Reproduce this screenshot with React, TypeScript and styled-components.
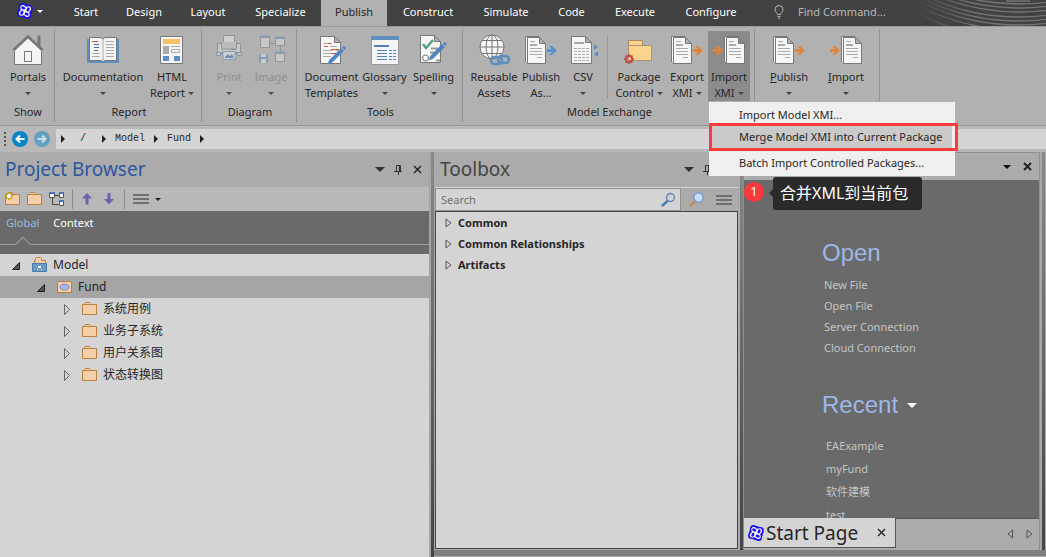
import React from "react";
import styled, { createGlobalStyle, css } from "styled-components";

const GlobalStyle = createGlobalStyle`
  *, *::before, *::after { box-sizing: border-box; }
  body {
    margin: 0;
    background: #ababab;
    color: #262626;
    font: 11px/16px "Noto Sans", "Noto Sans CJK SC", sans-serif;
  }
  button, input { font: inherit; color: inherit; }
  button { margin: 0; padding: 0; border: 0; background: none; cursor: pointer; }
  a { color: inherit; text-decoration: none; }
  ul { margin: 0; padding: 0; list-style: none; }
  svg { display: block; flex: none; }
`;

/* ---------- shell ---------- */

const Shell = styled.div`
  display: flex;
  flex-direction: column;
  height: 100vh;
  overflow: hidden;
`;

const MenuBar = styled.nav`
  position: relative;
  display: flex;
  align-items: stretch;
  flex: none;
  height: 26px;
  background: #424242;
  color: #fff;
`;

const AppMenu = styled.button`
  display: flex;
  align-items: center;
  gap: 4px;
  width: 60px;
  padding: 0 0 4px 17px;
`;

const MenuTab = styled.button<{ $w: number; $active?: boolean }>`
  position: relative;
  flex: none;
  width: ${(p) => p.$w}px;
  padding-bottom: 2px;
  ${(p) =>
    p.$active &&
    css`
      background: #b1b1b1;
      color: #262626;
      z-index: 1;
    `}
`;

const FindBox = styled.label`
  display: flex;
  align-items: center;
  gap: 14px;
  padding: 0 0 2px 22px;
  color: #b8b8b8;
`;

const FindInput = styled.input`
  width: 110px;
  padding: 0;
  border: 0;
  outline: 0;
  background: none;
  &::placeholder { color: #b8b8b8; opacity: 1; }
`;

const Swirl = styled.div`
  margin-left: auto;
  overflow: hidden;
`;

/* ---------- ribbon ---------- */

const Ribbon = styled.div`
  display: flex;
  flex: none;
  height: 100px;
  padding-top: 2px;
  background: #b1b1b1;
  border-top: 1px solid #9a9a9a;
  border-bottom: 1px solid #979797;
`;

const Group = styled.section<{ $w: number; $short?: boolean }>`
  display: flex;
  flex-direction: column;
  flex: none;
  width: ${(p) => p.$w}px;
  height: ${(p) => (p.$short ? 72 : 93)}px;
  padding: 2px 0 0 2px;
  border-right: 1px solid #939393;
`;

const GroupTools = styled.div`
  display: flex;
  justify-content: center;
  height: 70px;
`;

const GroupTitle = styled.h2`
  margin: 3px 0 0;
  font: inherit;
  text-align: center;
`;

const ToolWrap = styled.div`
  position: relative;
`;

const ToolButton = styled.button<{ $w: number; $active?: boolean }>`
  display: flex;
  flex-direction: column;
  align-items: center;
  width: ${(p) => p.$w}px;
  height: 70px;
  padding-top: 3px;
  white-space: nowrap;
  background: ${(p) => (p.$active ? "#8b8b8b" : "none")};
  &:disabled { color: #8a8a8a; opacity: 0.85; }
  &:disabled svg { opacity: 0.6; }
`;

const ToolText = styled.span`
  display: flex;
  flex-direction: column;
  align-items: center;
  margin-top: 3px;
`;

const ToolLine = styled.span`
  display: flex;
  align-items: center;
  gap: 3px;
  height: 16px;
`;

const InnerRule = styled.div`
  width: 1px;
  height: 62px;
  margin: 5px 4px 0;
  background: #979797;
`;

const Caret = styled.span<{ $tone?: string; $size?: number }>`
  width: 0;
  height: 0;
  border: ${(p) => p.$size ?? 3}px solid transparent;
  border-bottom-width: 0;
  border-top-color: ${(p) => p.$tone ?? "#444"};
`;

/* ---------- drop-down menu ---------- */

const DropMenu = styled.ul`
  position: absolute;
  top: 71px;
  left: 1px;
  z-index: 10;
  width: 246px;
  padding: 2px 3px 2px;
  background: #efefef;
`;

const DropItem = styled.li<{ $chosen?: boolean }>`
  position: relative;
  ${(p) =>
    p.$chosen &&
    css`
      margin-bottom: 4px;
      background: #cacaca;
      &::after {
        content: "";
        position: absolute;
        inset: -3px -6px -3px -3px;
        border: 3px solid #fb3a3c;
        pointer-events: none;
      }
    `}
  button {
    width: 100%;
    height: 22px;
    padding-left: 27px;
    text-align: left;
    white-space: nowrap;
  }
`;

/* ---------- breadcrumb ---------- */

const PathBar = styled.div`
  display: flex;
  align-items: center;
  flex: none;
  height: 26px;
  background: #b8b8b8;
`;

const Grip = styled.div`
  width: 2px;
  height: 14px;
  margin: 0 6px 0 4px;
  background: repeating-linear-gradient(#555 0 2px, transparent 2px 4px);
`;

const RoundButton = styled.button<{ $dim?: boolean }>`
  display: grid;
  place-items: center;
  width: 16px;
  height: 16px;
  margin-right: 6px;
  border-radius: 50%;
  background: ${(p) => (p.$dim ? "#62a0c2" : "#0a85c7")};
`;

const PathField = styled.div`
  display: flex;
  align-items: center;
  flex: 1;
  height: 20px;
  gap: 9px;
  padding-left: 5px;
  background: #d4d4d4;
  font: 10px/20px "Liberation Mono", monospace;
`;

const Chevron = styled.span`
  width: 0;
  height: 0;
  border: 4px solid transparent;
  border-right-width: 0;
  border-left-color: #222;
`;

const PathRoot = styled.a`
  width: 19px;
  padding-left: 6px;
`;

/* ---------- panels ---------- */

const Workspace = styled.main`
  display: flex;
  flex: 1;
  min-height: 0;
`;

const Browser = styled.section`
  display: flex;
  flex-direction: column;
  flex: none;
  width: 431px;
  border-right: 2px solid #a5a5a5;
`;

const Splitter = styled.div`
  flex: none;
  width: 3px;
  background: linear-gradient(#8a8a8a, #444);
`;

const Right = styled.div`
  display: flex;
  flex-direction: column;
  flex: 1;
  min-width: 0;
`;

const Docks = styled.div`
  display: flex;
  flex: 1;
  min-height: 0;
`;

const StatusEdge = styled.div`
  flex: none;
  height: 7px;
  background: #808080;
  border-bottom: 1px solid #ababab;
`;

const PanelHead = styled.header`
  display: flex;
  align-items: center;
  flex: none;
  height: 35px;
  padding: 0 2px 0 5px;
  background: #ababab;
`;

const PanelTitle = styled.h1<{ $tone: string }>`
  flex: 1;
  margin: 0;
  padding-bottom: 2px;
  font-size: 19px;
  line-height: 28px;
  font-weight: 400;
  color: ${(p) => p.$tone};
`;

const HeadButton = styled.button`
  display: grid;
  place-items: center;
  width: 19px;
  height: 20px;
`;

const BrowserTools = styled.div`
  display: flex;
  align-items: center;
  flex: none;
  height: 24px;
  padding-left: 2px;
  background: #b8b8b8;
`;

const IconButton = styled.button`
  display: grid;
  place-items: center;
  width: 22px;
  height: 22px;
`;

const ToolRule = styled.div`
  width: 1px;
  height: 20px;
  margin: 0 3px 0 4px;
  background: #8d8d8d;
`;

const ListButton = styled.button`
  display: flex;
  align-items: center;
  gap: 6px;
  margin-left: 5px;
`;

const BrowserTabs = styled.div`
  flex: none;
  height: 43px;
  padding-top: 4px;
  background: #6a6a6a;
  color: #fff;
`;

const TabRow = styled.div`
  display: flex;
  gap: 14px;
  height: 30px;
  padding-left: 6px;
  border-bottom: 1px solid #9c9c9c;
`;

const BrowserTab = styled.button<{ $active?: boolean }>`
  position: relative;
  height: 16px;
  color: ${(p) => (p.$active ? "#9db7e8" : "#fff")};
  ${(p) =>
    p.$active &&
    css`
      &::after {
        content: "";
        position: absolute;
        left: calc(50% - 6px);
        top: 24px;
        width: 12px;
        height: 12px;
        transform: rotate(45deg);
        background: #6a6a6a;
        border: 1px solid #9c9c9c;
        border-right-color: #6a6a6a;
        border-bottom-color: #6a6a6a;
      }
    `}
`;

const Tree = styled.ul`
  flex: 1;
  background: #d4d4d4;
  font-size: 12px;
`;

const TreeRow = styled.li<{ $indent: number; $selected?: boolean }>`
  display: flex;
  align-items: center;
  height: 22px;
  padding-left: ${(p) => p.$indent}px;
  background: ${(p) => (p.$selected ? "#a5a5a5" : "none")};
  > svg + svg { margin-right: 5px; }
`;

const Toolbox = styled.section`
  display: flex;
  flex-direction: column;
  flex: none;
  width: 306px;
  padding: 0 2px 1px 1px;
  background: #ababab;
`;

const SearchRow = styled.div`
  display: flex;
  align-items: stretch;
  flex: none;
  height: 24px;
  border-top: 1px solid #d4d4d4;
`;

const SearchField = styled.label`
  display: flex;
  align-items: center;
  flex: 1;
  padding: 0 4px 0 5px;
  background: #d4d4d4;
  border: 1px solid #8f8f8f;
`;

const SearchInput = styled.input`
  flex: 1;
  min-width: 0;
  padding: 0;
  border: 0;
  outline: 0;
  background: none;
  &::placeholder { color: #707070; opacity: 1; }
`;

const SearchButtons = styled.div`
  display: flex;
  align-items: center;
  gap: 9px;
  padding: 0 6px 0 4px;
`;

const Categories = styled.ul`
  flex: 1;
  background: #d4d4d4;
  border: 1px solid #444;
`;

const Category = styled.li`
  display: flex;
  align-items: center;
  gap: 6px;
  height: 21px;
  padding-left: 9px;
  font-weight: 700;
`;

const StartPanel = styled.section`
  position: relative;
  display: flex;
  flex-direction: column;
  flex: 1;
  min-width: 0;
  padding-bottom: 2px;
  background: #ababab;
  border: 1px solid #8f8f8f;
  border-width: 1px 1px 0 1px;
`;

const StartHead = styled.header`
  display: flex;
  align-items: center;
  justify-content: flex-end;
  gap: 2px;
  flex: none;
  height: 27px;
  padding-right: 2px;
`;

const StartBody = styled.div`
  flex: 1;
  min-height: 0;
  overflow: hidden;
  padding: 57px 0 0 78px;
  background: #6a6a6a;
  color: #c4c4c4;
`;

const StartHeading = styled.h2`
  display: flex;
  align-items: center;
  gap: 9px;
  margin: 0;
  font: 24px/32px "Liberation Sans", Arial, sans-serif;
  color: #9db7e8;
`;

const LinkList = styled.ul<{ $recent?: boolean }>`
  margin: ${(p) => (p.$recent ? "13px 0 0 4px" : "5px 0 31px 2px")};
  li { line-height: ${(p) => (p.$recent ? 23 : 21)}px; }
`;

const TabStrip = styled.div`
  display: flex;
  flex: none;
  justify-content: space-between;
  height: 30px;
`;

const PageTab = styled.div`
  display: flex;
  align-items: center;
  width: 152px;
  padding: 0 4px;
  background: #d4d4d4;
  border: 1px solid #555;
  border-width: 0 1px 1px 0;
  font-size: 19px;
  white-space: nowrap;
`;

const TabLabel = styled.button`
  display: flex;
  align-items: center;
  gap: 2px;
  flex: 1;
  line-height: 26px;
`;

const Scrollers = styled.div`
  display: flex;
  flex: 1;
  justify-content: flex-end;
  align-items: center;
  border-top: 1px solid #555;
`;

const RightEdge = styled.div`
  flex: none;
  width: 6px;
  border: solid #a8a8a8;
  border-width: 0 1px 0 2px;
  background: linear-gradient(#8a8a8a, #444);
`;

/* ---------- annotation ---------- */

const StepBadge = styled.div`
  position: absolute;
  top: 29px;
  left: 0;
  z-index: 5;
  width: 20px;
  height: 20px;
  border-radius: 50%;
  background: #fb3a3c;
  color: #fff;
  font-size: 12px;
  line-height: 20px;
  text-align: center;
`;

const StepNote = styled.div`
  position: absolute;
  top: 24px;
  left: 29px;
  z-index: 5;
  height: 33px;
  padding: 0 14px 0 7px;
  border-radius: 3px;
  background: #2a2a2a;
  color: #fff;
  font: 16px/33px "Noto Sans", "Noto Sans CJK SC", sans-serif;
  white-space: nowrap;
  &::before {
    content: "";
    position: absolute;
    left: -4px;
    top: 12px;
    border: 4px solid transparent;
    border-left-width: 0;
    border-right-color: #2a2a2a;
  }
`;

/* ---------- icons ---------- */

const Logo = () => (
  <svg width="16" height="16" viewBox="0 0 16 16">
    <g fill="#1a12e6">
      <circle cx="8" cy="8" r="7" />
      <circle cx="5.500" cy="3.600" r="3.500" />
      <circle cx="12.400" cy="5.500" r="3.500" />
      <circle cx="10.500" cy="12.400" r="3.500" />
      <circle cx="3.600" cy="10.500" r="3.500" />
    </g>
    <g fill="#fff">
      <circle cx="8" cy="8" r="4.600" />
      <circle cx="5.800" cy="4.400" r="2.500" />
      <circle cx="11.600" cy="5.800" r="2.500" />
      <circle cx="10.200" cy="11.600" r="2.500" />
      <circle cx="4.400" cy="10.200" r="2.500" />
    </g>
    <g fill="#1a12e6">
      {[0, 90, 180, 270].map((a) => (
        <ellipse key={a} cx="6.300" cy="4.900" rx="2.200" ry="1.400" transform={`rotate(${a} 8 8) rotate(25 6.300 4.900)`} />
      ))}
    </g>
  </svg>
);

const Tool = ({ children }: { children: React.ReactNode }) => (
  <svg width="32" height="32" viewBox="0 0 32 32">{children}</svg>
);

const House = () => (
  <Tool>
    <path d="M25.5 1.5h3v11h-3z" fill="#777" />
    <path d="M2.5 16.5L16 3.5L29.500 16.500V30.500H2.500Z" fill="#f4f4f4" stroke="#777" />
    <path d="M1.500 16L16 2.500L30.500 16" fill="none" stroke="#777" strokeWidth="2.600" />
    <path d="M12.500 17.500h7v10h-7z" fill="#f4f4f4" stroke="#777" />
  </Tool>
);

const Book = () => (
  <Tool>
    <path d="M0 5h32v24H0z" fill="#5f8fc0" />
    <path d="M2.500 3.500H14L16 5L18 3.500H29.500V26.500H18L16 28L14 26.500H2.500Z" fill="#f4f4f4" stroke="#777" />
    <path d="M16 5v22" stroke="#aaa" />
    <path d="M5 7.500h6" stroke="#d0543c" />
    <path d="M7 10.500h5M7 13.500h5M7 16.500h4" stroke="#3d70b0" />
    <path d="M5 19.500h8M5 22.500h8M19 7.500h8M19 10.500h8M19 13.500h8M19 16.500h8M19 19.500h8M19 22.500h8" stroke="#aaa" />
  </Tool>
);

const HtmlPage = () => (
  <Tool>
    <path d="M4.500 2.500h22v27h-22z" fill="#f4f4f4" stroke="#777" />
    <path d="M7 5h17v5H7z" fill="#f7c25f" />
    <path d="M7 12h6v8H7z" fill="#aaa" />
    <path d="M15 12.500h9" stroke="#aaa" />
    <path d="M15.500 15.500h8v3h-8z" fill="none" stroke="#aaa" />
    <path d="M7 22h6v5H7zM18 22h6v5h-6z" fill="#5f8fc0" />
  </Tool>
);

const Printer = () => (
  <Tool>
    <path d="M10.500 1.500h11v8h-11z" fill="#eee" stroke="#777" />
    <path d="M4.500 9.500h23v9h-23z" fill="#ddd" stroke="#777" />
    <path d="M8.500 8v7h15V8" fill="#c8c8c8" stroke="#777" />
    <path d="M3.500 18.500h25v3h-4v-2h-17v2h-4Z" fill="#ddd" stroke="#5f7fa0" />
    <path d="M10 17.500h12v8H10z" fill="#eee" stroke="#5f8fc0" />
    <path d="M12 23l3-3 2 2 2-2 2 4h-9z" fill="#3d70b0" />
    <path d="M18 15.500h4" stroke="#3d70b0" />
  </Tool>
);

const Diagram = () => (
  <Tool>
    <path d="M14 9.500h6M25.500 12v7" stroke="#777" />
    <g fill="#ddd" stroke="#777">
      <path d="M5.500 3.500h9v10h-9zM20.500 4.500h9v7h-9zM20.500 19.500h9v8h-9z" />
    </g>
    <path d="M5 2.500h10M20 3.500h10M20 18.500h10" stroke="#5f8fc0" strokeWidth="2" />
    <path d="M4 20h9v9H4z" fill="#5f8fc0" />
    <path d="M6 20h5v3H6zM6 25h5v4H6z" fill="#e4e4e4" />
  </Tool>
);

const Sheet = ({ x = 0, y = 2 }: { x?: number; y?: number }) => (
  <path
    transform={`translate(${x} ${y})`}
    d="M.5.500H14.500L20.500 6.500V27.500H.500ZM14.500.500V6.500H20.500"
    fill="#f6f6f6"
    stroke="#777"
  />
);

const Pencil = () => (
  <>
    <path d="M12 30l1.500-4L25 14.500l2.500 2.500L16 28.500z" fill="#4d83bf" stroke="#4d83bf" strokeWidth=".6" />
    <path d="M26 13.500l2-1.500 2 2-1.500 2z" fill="#4d83bf" />
  </>
);

const DocTemplates = () => (
  <Tool>
    <Sheet x={4} />
    <path d="M7 9.500h9M7 16.500h9M7 22.500h8M20 16.500h3M7 19.500h14" stroke="#aaa" />
    <path d="M12 9.500h3M8 12.500h4M15 15.500h8M15 19.500h5" stroke="#dd5034" />
    <path d="M14 12.500h7" stroke="#aaa" />
    <Pencil />
  </Tool>
);

const GlossaryIcon = () => (
  <Tool>
    <path d="M2.500 2.500h27v28h-27z" fill="#f6f6f6" stroke="#999" />
    <path d="M2 2h28v4H2z" fill="#5f8fc0" />
    <path d="M5 12h15" stroke="#4d83bf" strokeWidth="2" />
    <path d="M8 16.500h10M8 19.500h10M8 22.500h10M8 25.500h10" stroke="#4d83bf" />
    <path d="M20 16.500h7M20 19.500h7M20 22.500h7M20 25.500h7" stroke="#4d83bf" strokeDasharray="3 1" />
  </Tool>
);

const SpellingIcon = () => (
  <Tool>
    <Sheet x={2} y={1} />
    <path d="M5 10l3 4 7-8" fill="none" stroke="#55a583" strokeWidth="2.500" />
    <circle cx="7.500" cy="24" r="3" fill="none" stroke="#777" />
    <path d="M13 14.500h7M12 18.500h5M18 26.500h4" stroke="#999" strokeWidth="2" />
    <g transform="translate(-1 -4)"><Pencil /></g>
  </Tool>
);

const Globe = () => (
  <Tool>
    <circle cx="14" cy="13" r="12" fill="#f6f6f6" stroke="#777" />
    <ellipse cx="14" cy="13" rx="6" ry="12" fill="none" stroke="#777" />
    <path d="M14 1v24M2 13h24M4 6.500h20M4 19.500h20" stroke="#777" />
    <g fill="none" stroke="#5f8fc0" strokeWidth="2.600">
      <rect x="13" y="23" width="11" height="7" rx="3.500" />
      <rect x="20" y="22" width="11" height="7" rx="3.500" />
    </g>
  </Tool>
);

const Pages = ({ x }: { x: number }) => (
  <g transform={`translate(${x} 0)`}>
    <path d="M.500 28V2.500H14" fill="none" stroke="#777" />
    <path d="M1 3h13v25H1z" fill="#f6f6f6" />
    <path d="M2.500 3.500H14.500L20.500 9.500V29.500H2.500ZM14.500 3.500V9.500H20.500" fill="#f6f6f6" stroke="#777" />
    <path d="M5 7.500h5M5 14.500h12M5 17.500h12M5 20.500h12M12 23.500h5" stroke="#aaa" />
    <path d="M5 11h7" stroke="#aaa" strokeWidth="2" />
  </g>
);

const Arrow = ({ x, tone }: { x: number; tone: string }) => (
  <path transform={`translate(${x} 0)`} d="M0 15h5l-3-3h3l5 4.500-5 4.500H2l3-3H0z" fill={tone} />
);

const BLUE = "#5b8fca";
const ORANGE = "#e0843c";

const PagesOut = ({ tone }: { tone: string }) => (
  <Tool>
    <Pages x={0} />
    <Arrow x={22} tone={tone} />
  </Tool>
);

const PagesIn = () => (
  <Tool>
    <Pages x={11} />
    <Arrow x={0} tone={ORANGE} />
  </Tool>
);

const Csv = () => (
  <Tool>
    <Sheet x={4} />
    <path d="M7 9h10" stroke="#aaa" strokeWidth="2" />
    <path d="M7 14.500h15M7 17.500h15M7 20.500h15M7 23.500h15M7 26.500h15" stroke="#aaa" strokeDasharray="3 1" />
    <path d="M27 10l4 3-4 3zM31 17v6l-4-3z" fill={BLUE} />
  </Tool>
);

const PackageIcon = () => (
  <Tool>
    <path d="M5.500 6.500h14v5h-14z" fill="#fbd38b" stroke="#a58a5c" />
    <path d="M5.500 11.500h23v15h-23z" fill="#fbd38b" stroke="#a5937a" />
    <circle cx="6" cy="25" r="3" fill="none" stroke="#c0504d" strokeWidth="2" />
    <path d="M6 20v2M6 28v2M1 25h2M9 25h2M2.500 21.500l1.500 1.500M8 27l1.500 1.500M2.500 28.500l1.500-1.500M8 23l1.500-1.500" stroke="#c0504d" strokeWidth="2" />
  </Tool>
);

const Bulb = () => (
  <svg width="10" height="14" viewBox="0 0 10 14" fill="none" stroke="#b8b8b8">
    <path d="M3.500 9.500C3.500 8 1 7 1 4.500a4 4 0 0 1 8 0C9 7 6.500 8 6.500 9.500ZM3.500 11.500h3M4 13.300h2" />
  </svg>
);

const SwirlLines = () => (
  <svg width="130" height="26" viewBox="0 0 130 26" fill="none" stroke="url(#fade)" strokeWidth="1.400">
    <defs>
      <linearGradient id="fade" gradientUnits="userSpaceOnUse" x1="0" y1="0" x2="60" y2="0">
        <stop offset="0" stopColor="#424242" />
        <stop offset="1" stopColor="#747474" />
      </linearGradient>
    </defs>
    <path d="M90 0h24v2h-24z" fill="#666" stroke="none" />
    {[4, 8, 12, 17, 21, 25, 30, 38, 47].map((b) => (
      <circle key={b} cx="103" cy={b - 220} r="220" />
    ))}
  </svg>
);

const NavArrow = ({ back }: { back?: boolean }) => (
  <svg width="10" height="10" viewBox="0 0 10 10" fill="none" stroke={back ? "#fff" : "#cfdde6"} strokeWidth="2">
    <path d={back ? "M9.500 5H2M5 1.500L1.500 5L5 8.500" : "M.500 5H8M5 1.500L8.500 5L5 8.500"} />
  </svg>
);

const Pin = () => (
  <svg width="9" height="10" viewBox="0 0 9 10" fill="none" stroke="#333">
    <path d="M2.500 6V.500h4V6M5.500 1v5M0 6.500h8M4.500 7v3" />
  </svg>
);

const Cross = ({ bold }: { bold?: boolean }) => (
  <svg width="9" height="9" viewBox="0 0 9 9" stroke="#222" strokeWidth={bold ? 2 : 1.400}>
    <path d="M1 1l7 7M8 1L1 8" />
  </svg>
);

const Folder = ({ isNew }: { isNew?: boolean }) => (
  <svg width="16" height="14" viewBox="0 0 16 14">
    <path d="M2.500 3V1.500l1-1h4l1 1V3" fill="#f5cfa8" stroke="#b9803f" />
    <path d="M.500 2.500h14v10H.500z" fill="#f5cfa8" stroke="#b9803f" />
    {isNew && (
      <>
        <path d="M4 0v8M0 4h8M1.200 1.200l5.600 5.600M6.800 1.200l-5.600 5.600" stroke="#b5a000" strokeWidth="1.300" />
        <circle cx="4" cy="4" r="2" fill="#fff" />
      </>
    )}
  </svg>
);

const TreeIcon = () => (
  <svg width="16" height="15" viewBox="0 0 16 15">
    <path d="M5 3.500h5M3.500 6v6.500h6" fill="none" stroke="#444" />
    <path d="M.500.500h5v5h-5zM10.500.500h4v5h-4zM10.500 8.500h4v5h-4z" fill="#fff" stroke="#555" />
    <path d="M0 1h6M10 1h5M10 9h5" stroke="#4a72b8" strokeWidth="2" />
  </svg>
);

const MoveArrow = ({ down }: { down?: boolean }) => (
  <svg width="10" height="12" viewBox="0 0 10 12" fill="#6a64b0">
    <path d={down ? "M3.500 0h3v6H10L5 11.500L0 6h3.500z" : "M3.500 11.500h3V5.500H10L5 0L0 5.500h3.500z"} />
  </svg>
);

const Lines = () => (
  <svg width="16" height="10" viewBox="0 0 16 10" fill="#6f6f6f">
    <path d="M0 0h16v2H0zM0 4h16v2H0zM0 8h16v2H0z" />
  </svg>
);

const ModelIcon = () => (
  <svg width="16" height="16" viewBox="0 0 16 16">
    <path d="M2.500 6V3.500h1v-2l1-1h4l1 1v2h4V7" fill="#f5cfa8" stroke="#b9803f" />
    <path d="M.500 6.500h14v8H.500z" fill="#6a9bc8" stroke="#4b7cac" />
    <path d="M6 9h3v2H6zM5 12h1v1H5zM9 12h1v1H9z" fill="#fff" />
  </svg>
);

const FundIcon = () => (
  <svg width="16" height="14" viewBox="0 0 16 14">
    <path d="M.500 1.500h14v11H.500z" fill="#f5cfa8" stroke="#b9803f" />
    <ellipse cx="7.500" cy="7" rx="4.500" ry="3" fill="#a5b6ee" stroke="#7b8bd0" />
  </svg>
);

const Expander = ({ open }: { open?: boolean }) => (
  <svg width="20" height="12" viewBox="0 0 20 12">
    {open ? (
      <path d="M7.500 3.500v7h-7z" fill="#555" stroke="#222" />
    ) : (
      <path d="M2.500 1.500v10l5-5z" fill="none" stroke="#666" />
    )}
  </svg>
);

const Wedge = ({ left }: { left?: boolean }) => (
  <svg width="7" height="10" viewBox="0 0 7 10" fill="none" stroke="#555">
    <path d={left ? "M5.500 1v8L1 5z" : "M1 1v8l5-4z"} />
  </svg>
);

const Magnifier = ({ color }: { color?: boolean }) => (
  <svg width="15" height="15" viewBox="0 0 15 15">
    <path d="M1.500 13.500L6.500 9" stroke={color ? "#b98a66" : "#4b80b8"} strokeWidth="2.400" strokeLinecap="round" />
    <circle cx="9.500" cy="5.500" r={color ? 4.600 : 4} fill={color ? "#c3e0f8" : "none"} stroke={color ? "#7d94dd" : "#5b8abb"} strokeWidth="1.400" />
  </svg>
);

/* ---------- parts ---------- */

interface ToolProps {
  icon: React.ReactNode;
  label: React.ReactNode;
  second?: string;
  caret?: boolean;
  width: number;
  active?: boolean;
  disabled?: boolean;
}

const RibbonTool = ({ icon, label, second, caret, width, active, disabled }: ToolProps) => (
  <ToolButton $w={width} $active={active} disabled={disabled}>
    {icon}
    <ToolText>
      <ToolLine><span>{label}</span></ToolLine>
      <ToolLine>
        {second && <span>{second}</span>}
        {caret && <Caret />}
      </ToolLine>
    </ToolText>
  </ToolButton>
);

const MENU: [string, number][] = [
  ["Start", 52], ["Design", 64], ["Layout", 64], ["Specialize", 81], ["Publish", 66],
  ["Construct", 82], ["Simulate", 74], ["Code", 57], ["Execute", 70], ["Configure", 82],
];

const PACKAGES = ["系统用例", "业务子系统", "用户关系图", "状态转换图"];

export default function App() {
  return (
    <Shell>
      <GlobalStyle />
      <MenuBar>
        <AppMenu aria-label="Application menu"><Logo /><Caret $tone="#fff" /></AppMenu>
        {MENU.map(([name, w]) => (
          <MenuTab key={name} $w={w} $active={name === "Publish"}>{name}</MenuTab>
        ))}
        <FindBox>
          <Bulb />
          <FindInput placeholder="Find Command..." aria-label="Find Command" />
        </FindBox>
        <Swirl><SwirlLines /></Swirl>
      </MenuBar>

      <Ribbon>
        <Group $w={55}>
          <GroupTools>
            <RibbonTool icon={<House />} label="Portals" caret width={52} />
          </GroupTools>
          <GroupTitle>Show</GroupTitle>
        </Group>
        <Group $w={147}>
          <GroupTools>
            <RibbonTool icon={<Book />} label="Documentation" caret width={86} />
            <RibbonTool icon={<HtmlPage />} label="HTML" second="Report" caret width={52} />
          </GroupTools>
          <GroupTitle>Report</GroupTitle>
        </Group>
        <Group $w={95}>
          <GroupTools>
            <RibbonTool icon={<Printer />} label="Print" caret width={42} disabled />
            <RibbonTool icon={<Diagram />} label="Image" caret width={42} disabled />
          </GroupTools>
          <GroupTitle>Diagram</GroupTitle>
        </Group>
        <Group $w={166}>
          <GroupTools>
            <RibbonTool icon={<DocTemplates />} label="Document" second="Templates" width={56} />
            <RibbonTool icon={<GlossaryIcon />} label="Glossary" caret width={50} />
            <RibbonTool icon={<SpellingIcon />} label="Spelling" caret width={48} />
          </GroupTools>
          <GroupTitle>Tools</GroupTitle>
        </Group>
        <Group $w={292}>
          <GroupTools>
            <RibbonTool icon={<Globe />} label="Reusable" second="Assets" width={50} />
            <RibbonTool icon={<PagesOut tone={BLUE} />} label="Publish" second="As..." width={44} />
            <RibbonTool icon={<Csv />} label="CSV" caret width={40} />
            <InnerRule />
            <RibbonTool icon={<PackageIcon />} label="Package" second="Control" caret width={54} />
            <RibbonTool icon={<PagesOut tone={ORANGE} />} label="Export" second="XMI" caret width={42} />
            <ToolWrap>
              <RibbonTool icon={<PagesIn />} label="Import" second="XMI" caret width={42} active />
              <DropMenu>
                <DropItem><button>Import Model XMI...</button></DropItem>
                <DropItem $chosen><button>Merge Model XMI into Current Package</button></DropItem>
                <DropItem><button>Batch Import Controlled Packages...</button></DropItem>
              </DropMenu>
            </ToolWrap>
          </GroupTools>
          <GroupTitle>Model Exchange</GroupTitle>
        </Group>
        <Group $w={125} $short>
          <GroupTools>
            <RibbonTool icon={<PagesOut tone={ORANGE} />} label={<><u>P</u>ublish</>} caret width={56} />
            <RibbonTool icon={<PagesIn />} label={<><u>I</u>mport</>} caret width={58} />
          </GroupTools>
        </Group>
      </Ribbon>

      <PathBar>
        <Grip />
        <RoundButton aria-label="Back"><NavArrow back /></RoundButton>
        <RoundButton aria-label="Forward" $dim><NavArrow /></RoundButton>
        <PathField>
          <Chevron />
          <PathRoot href="#root">/</PathRoot>
          <Chevron />
          <a href="#model">Model</a>
          <Chevron />
          <a href="#fund">Fund</a>
          <Chevron />
        </PathField>
      </PathBar>

      <Workspace>
        <Browser>
          <PanelHead>
            <PanelTitle $tone="#2b579f">Project Browser</PanelTitle>
            <HeadButton aria-label="Options"><Caret $size={5} $tone="#333" /></HeadButton>
            <HeadButton aria-label="Pin"><Pin /></HeadButton>
            <HeadButton aria-label="Close"><Cross /></HeadButton>
          </PanelHead>
          <BrowserTools>
            <IconButton aria-label="New package"><Folder isNew /></IconButton>
            <IconButton aria-label="Open package"><Folder /></IconButton>
            <IconButton aria-label="New diagram"><TreeIcon /></IconButton>
            <ToolRule />
            <IconButton aria-label="Move up"><MoveArrow /></IconButton>
            <IconButton aria-label="Move down"><MoveArrow down /></IconButton>
            <ToolRule />
            <ListButton aria-label="Menu"><Lines /><Caret $tone="#222" /></ListButton>
          </BrowserTools>
          <BrowserTabs>
            <TabRow>
              <BrowserTab $active>Global</BrowserTab>
              <BrowserTab>Context</BrowserTab>
            </TabRow>
          </BrowserTabs>
          <Tree>
            <TreeRow $indent={12}><Expander open /><ModelIcon />Model</TreeRow>
            <TreeRow $indent={37} $selected><Expander open /><FundIcon />Fund</TreeRow>
            {PACKAGES.map((name) => (
              <TreeRow key={name} $indent={62}><Expander /><Folder />{name}</TreeRow>
            ))}
          </Tree>
        </Browser>
        <Splitter />
        <Right>
          <Docks>
            <Toolbox>
              <PanelHead>
                <PanelTitle $tone="#444">Toolbox</PanelTitle>
                <HeadButton aria-label="Options"><Caret $size={5} $tone="#333" /></HeadButton>
                <HeadButton aria-label="Pin"><Pin /></HeadButton>
                <HeadButton aria-label="Close"><Cross /></HeadButton>
              </PanelHead>
              <SearchRow>
                <SearchField>
                  <SearchInput placeholder="Search" aria-label="Search toolbox" />
                  <Magnifier />
                </SearchField>
                <SearchButtons>
                  <IconButton aria-label="Find element"><Magnifier color /></IconButton>
                  <button aria-label="Toolbox menu"><Lines /></button>
                </SearchButtons>
              </SearchRow>
              <Categories>
                {["Common", "Common Relationships", "Artifacts"].map((name) => (
                  <Category key={name}><Wedge />{name}</Category>
                ))}
              </Categories>
            </Toolbox>
            <Splitter />
            <StartPanel>
              <StartHead>
                <HeadButton aria-label="Options"><Caret $size={4} $tone="#111" /></HeadButton>
                <HeadButton aria-label="Close"><Cross bold /></HeadButton>
              </StartHead>
              <StepBadge>1</StepBadge>
              <StepNote>合并XML到当前包</StepNote>
              <StartBody>
                <StartHeading>Open</StartHeading>
                <LinkList>
                  {["New File", "Open File", "Server Connection", "Cloud Connection"].map((t) => (
                    <li key={t}><a href="#open">{t}</a></li>
                  ))}
                </LinkList>
                <StartHeading>Recent <Caret $size={5} $tone="#fff" /></StartHeading>
                <LinkList $recent>
                  {["EAExample", "myFund", "软件建模", "test"].map((t) => (
                    <li key={t}><a href="#recent">{t}</a></li>
                  ))}
                </LinkList>
              </StartBody>
              <TabStrip>
                <PageTab>
                  <TabLabel><Logo />Start Page</TabLabel>
                  <HeadButton aria-label="Close tab"><Cross /></HeadButton>
                </PageTab>
                <Scrollers>
                  <HeadButton aria-label="Previous"><Wedge left /></HeadButton>
                  <HeadButton aria-label="Next"><Wedge /></HeadButton>
                </Scrollers>
              </TabStrip>
            </StartPanel>
            <RightEdge />
          </Docks>
          <StatusEdge />
        </Right>
      </Workspace>
    </Shell>
  );
}
